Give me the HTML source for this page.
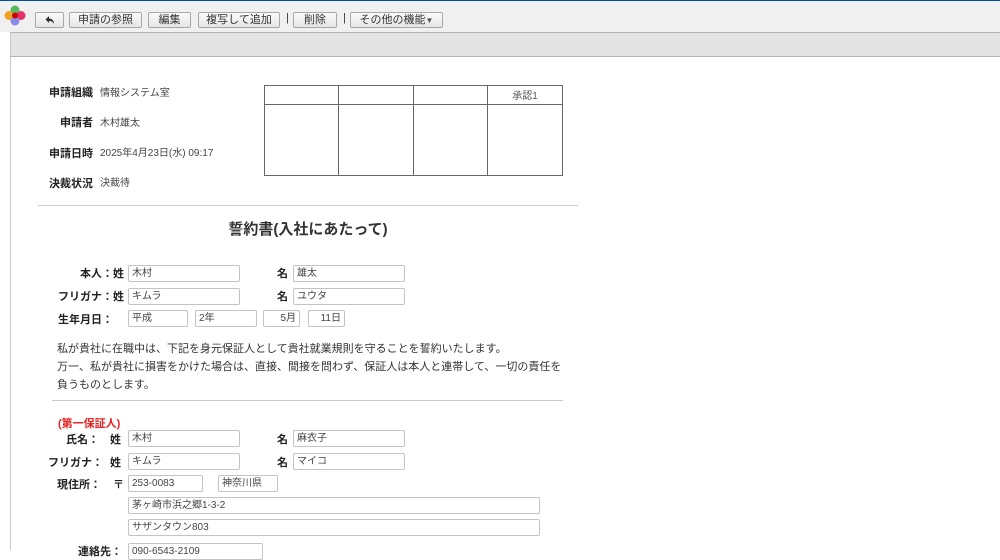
<!DOCTYPE html>
<html><head><meta charset="utf-8"><style>
*{margin:0;padding:0;box-sizing:border-box}
body{width:1000px;height:550px;overflow:hidden;background:#fff;font-family:"Liberation Sans","Noto Sans CJK JP",sans-serif;position:relative;color:#333}
.a{position:absolute;white-space:nowrap}
.btn{position:absolute;top:12px;height:16px;border:1px solid #a8a8a8;border-radius:2px;background:linear-gradient(#fafafa,#e6e6e6);font-size:11px;line-height:14px;text-align:center;color:#333}
.lbl{position:absolute;font-size:11px;font-weight:bold;color:#222;white-space:nowrap}
.val{position:absolute;font-size:10px;color:#444;white-space:nowrap}
.in{position:absolute;height:17px;border:1px solid #c4c4c4;border-radius:2px;font-size:10px;line-height:16px;padding-left:3px;color:#444;white-space:nowrap}
.r{text-align:right;padding-right:3px}
</style></head><body>
<div class="a" style="left:0;top:0;width:1000px;height:1px;background:#0050a0"></div>
<div class="a" style="left:0;top:1px;width:1000px;height:31px;background:#f0f0f0"></div>
<div class="a" style="left:10px;top:32px;width:990px;height:25px;background:#e4e4e4;border-top:1px solid #b4b4b4;border-bottom:1px solid #b4b4b4;border-left:1px solid #c8c8c8"></div>
<div class="a" style="left:10px;top:57px;width:1px;height:493px;background:#c8c8c8"></div>
<svg class="a" style="left:4px;top:5px" width="22" height="22" viewBox="0 0 22 22"><circle cx="11" cy="5" r="4.5" fill="#5cb85c"/><circle cx="5" cy="10.5" r="4.5" fill="#f0a020"/><circle cx="17" cy="10.5" r="4.5" fill="#e8336a"/><circle cx="11" cy="16" r="4.5" fill="#8a8ae8"/><circle cx="11" cy="10.5" r="3" fill="#c00"/></svg>
<div class="btn" style="left:35px;width:29px"><svg width="12" height="12" viewBox="0 0 12 12" style="margin-top:1px"><path d="M5 2 L1.5 5.5 L5 9 V7 C7.5 7 9 8 10 10 C10 6.5 8 4.5 5 4.5 Z" fill="#333"/></svg></div>
<div class="btn" style="left:69px;width:73px">申請の参照</div>
<div class="btn" style="left:148px;width:43px">編集</div>
<div class="btn" style="left:198px;width:82px">複写して追加</div>
<div class="a" style="left:286px;top:12px;font-size:11px;color:#333">|</div>
<div class="btn" style="left:293px;width:44px">削除</div>
<div class="a" style="left:343px;top:12px;font-size:11px;color:#333">|</div>
<div class="btn" style="left:350px;width:93px">その他の機能<span style="font-size:8px;color:#555">▼</span></div>

<div class="lbl" style="left:30px;width:63px;text-align:right;top:84px">申請組織</div><div class="val" style="left:100px;top:84px">情報システム室</div>
<div class="lbl" style="left:30px;width:63px;text-align:right;top:114px">申請者</div><div class="val" style="left:100px;top:114px">木村雄太</div>
<div class="lbl" style="left:30px;width:63px;text-align:right;top:145px">申請日時</div><div class="val" style="left:100px;top:144px">2025年4月23日(水) 09:17</div>
<div class="lbl" style="left:30px;width:63px;text-align:right;top:175px">決裁状況</div><div class="val" style="left:100px;top:174px">決裁待</div>

<div class="a" style="left:264px;top:85px;width:299px;height:91px;border:1px solid #666"></div>
<div class="a" style="left:264px;top:104px;width:299px;height:1px;background:#666"></div>
<div class="a" style="left:338px;top:85px;width:1px;height:91px;background:#666"></div>
<div class="a" style="left:413px;top:85px;width:1px;height:91px;background:#666"></div>
<div class="a" style="left:487px;top:85px;width:1px;height:91px;background:#666"></div>
<div class="val" style="left:487px;width:76px;text-align:center;top:87px;color:#555">承認1</div>

<div class="a" style="left:38px;top:205px;width:540px;height:1px;background:#ccc"></div>
<div class="a" style="left:38px;width:540px;text-align:center;top:218px;font-size:15px;font-weight:bold;color:#333">誓約書(入社にあたって)</div>

<div class="lbl" style="left:40px;width:84px;text-align:right;top:265px">本人：姓</div>
<div class="in" style="left:128px;top:265px;width:112px">木村</div>
<div class="lbl" style="left:277px;top:265px">名</div>
<div class="in" style="left:293px;top:265px;width:112px">雄太</div>
<div class="lbl" style="left:40px;width:84px;text-align:right;top:288px">フリガナ：姓</div>
<div class="in" style="left:128px;top:288px;width:112px">キムラ</div>
<div class="lbl" style="left:277px;top:288px">名</div>
<div class="in" style="left:293px;top:288px;width:112px">ユウタ</div>
<div class="lbl" style="left:58px;top:311px">生年月日：</div>
<div class="in" style="left:128px;top:310px;width:60px">平成</div>
<div class="in" style="left:195px;top:310px;width:62px">2年</div>
<div class="in r" style="left:263px;top:310px;width:37px">5月</div>
<div class="in r" style="left:308px;top:310px;width:37px">11日</div>

<div class="a" style="left:57px;top:340px;font-size:11px;line-height:18px;color:#333">私が貴社に在職中は、下記を身元保証人として貴社就業規則を守ることを誓約いたします。<br>万一、私が貴社に損害をかけた場合は、直接、間接を問わず、保証人は本人と連帯して、一切の責任を<br>負うものとします。</div>
<div class="a" style="left:52px;top:400px;width:511px;height:1px;background:#ccc"></div>

<div class="a" style="left:58px;top:415px;font-size:11px;font-weight:bold;color:#e82020">(第一保証人)</div>
<div class="lbl" style="left:66px;top:431px">氏名：</div><div class="lbl" style="left:110px;top:431px">姓</div>
<div class="in" style="left:128px;top:430px;width:112px">木村</div>
<div class="lbl" style="left:277px;top:431px">名</div>
<div class="in" style="left:293px;top:430px;width:112px">麻衣子</div>
<div class="lbl" style="left:48px;top:454px">フリガナ：</div><div class="lbl" style="left:110px;top:454px">姓</div>
<div class="in" style="left:128px;top:453px;width:112px">キムラ</div>
<div class="lbl" style="left:277px;top:454px">名</div>
<div class="in" style="left:293px;top:453px;width:112px">マイコ</div>
<div class="lbl" style="left:57px;top:476px">現住所：</div><div class="lbl" style="left:113px;top:476px">〒</div>
<div class="in" style="left:128px;top:475px;width:75px">253-0083</div>
<div class="in" style="left:218px;top:475px;width:60px">神奈川県</div>
<div class="in" style="left:128px;top:497px;width:412px">茅ヶ崎市浜之郷1-3-2</div>
<div class="in" style="left:128px;top:519px;width:412px">サザンタウン803</div>
<div class="lbl" style="left:78px;top:543px">連絡先：</div>
<div class="in" style="left:128px;top:543px;width:135px">090-6543-2109</div>
</body></html>
